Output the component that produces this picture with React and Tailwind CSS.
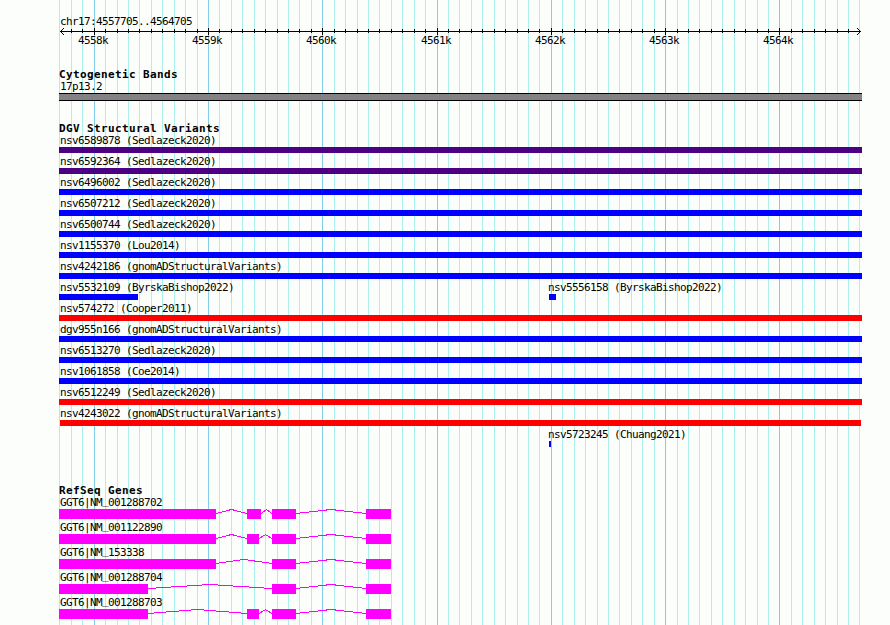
import React from 'react';

const LEFT = 59;
const START = 4557705;
const END = 4564705;
const SCALE = 800 / (END - START);

const toX = (pos) => Math.round(60 + (pos - START) * SCALE);

const lines = [];
for (let pos = 4557700; pos <= END; pos += 100) {
	lines.push({ x: toX(pos), pos: pos, major: pos % 1000 === 0 });
}

const PURPLE = 'bg-[#4c0084]';
const BLUE = 'bg-[#0000ff]';
const RED = 'bg-[#ff0000]';

// each row holds one or more features, start/end are in pixels
const variants = [
	[{ name: 'nsv6589878 (Sedlazeck2020)', start: 59, end: 862, color: PURPLE }],
	[{ name: 'nsv6592364 (Sedlazeck2020)', start: 59, end: 862, color: PURPLE }],
	[{ name: 'nsv6496002 (Sedlazeck2020)', start: 59, end: 862, color: BLUE }],
	[{ name: 'nsv6507212 (Sedlazeck2020)', start: 59, end: 862, color: BLUE }],
	[{ name: 'nsv6500744 (Sedlazeck2020)', start: 59, end: 862, color: BLUE }],
	[{ name: 'nsv1155370 (Lou2014)', start: 59, end: 862, color: BLUE }],
	[{ name: 'nsv4242186 (gnomADStructuralVariants)', start: 59, end: 862, color: BLUE }],
	[
		{ name: 'nsv5532109 (ByrskaBishop2022)', start: 59, end: 138, color: BLUE },
		{ name: 'nsv5556158 (ByrskaBishop2022)', start: 549, end: 556, color: BLUE },
	],
	[{ name: 'nsv574272 (Cooper2011)', start: 59, end: 862, color: RED }],
	[{ name: 'dgv955n166 (gnomADStructuralVariants)', start: 59, end: 862, color: BLUE }],
	[{ name: 'nsv6513270 (Sedlazeck2020)', start: 59, end: 862, color: BLUE }],
	[{ name: 'nsv1061858 (Coe2014)', start: 59, end: 862, color: BLUE }],
	[{ name: 'nsv6512249 (Sedlazeck2020)', start: 59, end: 862, color: RED }],
	[{ name: 'nsv4243022 (gnomADStructuralVariants)', start: 60, end: 861, color: RED }],
	[{ name: 'nsv5723245 (Chuang2021)', start: 549, end: 551, color: BLUE }],
];

const genes = [
	{ name: 'GGT6|NM_001288702', exons: [[59, 216], [247, 261], [272, 296], [366, 391]] },
	{ name: 'GGT6|NM_001122890', exons: [[59, 216], [247, 259], [272, 296], [366, 391]] },
	{ name: 'GGT6|NM_153338', exons: [[59, 216], [272, 296], [366, 391]] },
	{ name: 'GGT6|NM_001288704', exons: [[59, 148], [272, 296], [366, 391]] },
	{ name: 'GGT6|NM_001288703', exons: [[59, 148], [247, 259], [272, 296], [366, 391]] },
];

function Grid() {
	return (
		<svg className="absolute inset-0" width="890" height="625" shapeRendering="crispEdges">
			{lines.map((l) => (
				<rect key={l.pos} x={l.x} y="0" width="1" height="625" fill={l.major ? '#84ceec' : '#acf0ec'} />
			))}
		</svg>
	);
}

function Label({ children }) {
	return <div className="h-[13px] whitespace-pre text-[11px] leading-[13px] tracking-[-0.622px]">{children}</div>;
}

function Heading({ children }) {
	return <h2 className="h-3 pl-[59px] whitespace-pre text-[11px] font-bold leading-[13px] tracking-[0.378px]">{children}</h2>;
}

function Ruler() {
	return (
		<div className="h-[53px] pt-[15px]">
			<div className="pl-[60px]"><Label>chr17:4557705..4564705</Label></div>
			<div className="relative h-[6px]">
				<svg className="absolute left-0 top-0" width="890" height="7" shapeRendering="crispEdges">
					<rect x="60" y="3" width="801" height="1" />
					{lines.slice(1, -1).map((l) => (
						<rect key={l.pos} x={l.x} y={l.major ? 0 : 1} width="1" height={l.major ? 7 : 4} />
					))}
					<path d="M60 3h1v1h-1zM61 2h1v1h-1zM62 1h1v1h-1zM63 0h1v1h-1zM61 4h1v1h-1zM62 5h1v1h-1zM63 6h1v1h-1z" />
					<path d="M860 3h1v1h-1zM859 2h1v1h-1zM858 1h1v1h-1zM857 0h1v1h-1zM859 4h1v1h-1zM858 5h1v1h-1zM857 6h1v1h-1z" />
				</svg>
			</div>
			<div className="relative h-[13px]">
				{lines.filter((l) => l.major).map((l) => (
					<div key={l.pos} className="absolute top-0" style={{ left: l.x - 16 }}>
						<Label>{l.pos / 1000 + 'k'}</Label>
					</div>
				))}
			</div>
		</div>
	);
}

function VariantRow({ features }) {
	return (
		<div className="grid h-[21px]">
			{features.map((f) => (
				<div key={f.name} className="col-start-1 row-start-1">
					<div style={{ paddingLeft: f.start > 60 ? f.start - 1 : LEFT + 1 }}><Label>{f.name}</Label></div>
					<div className={'h-[6px] ' + f.color} style={{ marginLeft: f.start, width: f.end - f.start }}></div>
				</div>
			))}
		</div>
	);
}

function GeneRow({ gene }) {
	const [prefix, id] = gene.name.split('_');
	return (
		<div className="h-[25px]">
			<div className="pl-[60px]">
				<Label>{prefix}<span className="inline-block -translate-y-[2px]">_</span>{id}</Label>
			</div>
			<svg className="block" width="890" height="10" shapeRendering="crispEdges">
				{gene.exons.slice(1).map((exon, i) => {
					const from = gene.exons[i][1];
					const to = exon[0];
					return (
						<polyline
							key={from}
							points={`${from},4.5 ${(from + to) / 2},0.5 ${to},4.5`}
							fill="none"
							stroke="#ff00ff"
						/>
					);
				})}
				{gene.exons.map((exon) => (
					<rect key={exon[0]} x={exon[0]} y="0" width={exon[1] - exon[0]} height="10" fill="#ff00ff" />
				))}
			</svg>
		</div>
	);
}

function App() {
	return (
		<div className="relative h-[625px] w-[890px] overflow-hidden bg-[#fcfefc] font-['DejaVu_Sans_Mono',monospace] text-black">
			<Grid />
			<div className="relative flex flex-col">
				<Ruler />

				<div className="mt-[15px] h-[33px]">
					<Heading>Cytogenetic Bands</Heading>
					<div className="pl-[60px]"><Label>17p13.2</Label></div>
					<div className="ml-[59px] h-2 w-[803px] border-y border-black bg-[#848284]"></div>
				</div>

				<div className="mt-[21px]">
					<Heading>DGV Structural Variants</Heading>
					{variants.map((features) => (
						<VariantRow key={features[0].name} features={features} />
					))}
				</div>

				<div className="mt-[35px]">
					<Heading>RefSeq Genes</Heading>
					{genes.map((gene) => (
						<GeneRow key={gene.name} gene={gene} />
					))}
				</div>
			</div>
		</div>
	);
}

export default App;
